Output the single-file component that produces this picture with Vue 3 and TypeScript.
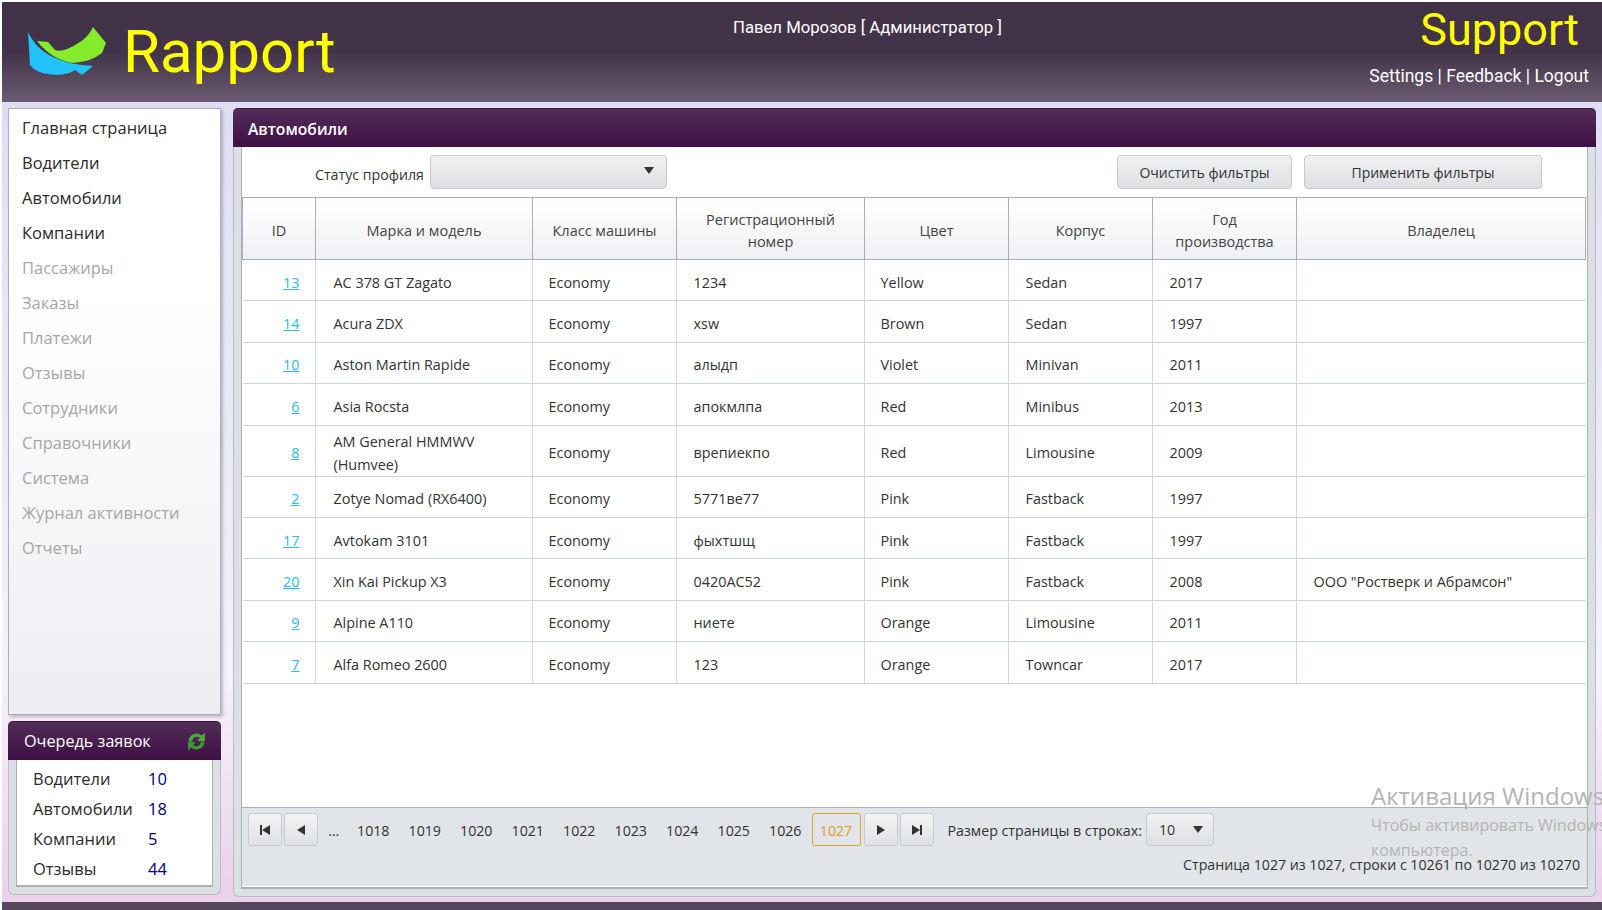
<template>
  <div class="page">
    <header class="top-bar">
      <div class="brand">
        <svg class="logo" width="80" height="52" viewBox="0 0 80 52">
          <path d="M0 5 C4 14 12 24 25 30 C40 37 52 38 65 39 L54 48 L47 43 C42 47 30 49 20 47 C12 46 6 43 2 38 Z" fill="#22c3fb" />
          <path d="M9 14 L20 15 L27 23 C33 26 45 20 55 13 C60 9 63 4 65 0 L78 16 L74 26 C66 32 58 35 44 36 C30 33 18 26 9 14 Z" fill="#85ec2c" />
        </svg>
        <span class="brand-name">Rapport</span>
      </div>
      <div class="user-name">Павел Морозов [ Администратор ]</div>
      <div class="top-right">
        <div class="support">Support</div>
        <div class="top-links">Settings | Feedback | Logout</div>
      </div>
    </header>

    <div class="workspace">
      <aside class="sidebar">
        <nav class="menu">
          <a
            v-for="item in menuItems"
            :key="item.label"
            class="menu-item"
            :class="{ disabled: item.disabled }"
          >{{ item.label }}</a>
        </nav>
        <section class="queue">
          <div class="queue-head">
            <span>Очередь заявок</span>
            <svg class="refresh" width="21" height="21" viewBox="0 0 20 20">
              <path d="M2.500 10 A7.500 7.500 0 0 1 15 4.300 L18 1.500 V9.500 H10.500 L13.300 6.700 A4.300 4.300 0 0 0 6 10 Z" fill="#4aa83e" />
              <path d="M17.500 10 A7.500 7.500 0 0 1 5 15.700 L2 18.500 V10.500 H9.500 L6.700 13.300 A4.300 4.300 0 0 0 14 10 Z" fill="#3c9a35" />
            </svg>
          </div>
          <div class="queue-frame">
            <div class="queue-body">
              <div v-for="q in queueItems" :key="q.label" class="queue-row">
                <span class="queue-label">{{ q.label }}</span>
                <span class="queue-count">{{ q.count }}</span>
              </div>
            </div>
          </div>
        </section>
      </aside>

      <main class="panel">
        <div class="panel-head">Автомобили</div>
        <div class="panel-frame">
          <div class="panel-inner">
            <div class="filters">
              <div class="filter-left">
                <label class="filter-label">Статус профиля</label>
                <div class="filter-select"><span class="arrow-down"></span></div>
              </div>
              <div class="filter-buttons">
                <button class="btn btn-clear">Очистить фильтры</button>
                <button class="btn btn-apply">Применить фильтры</button>
              </div>
            </div>

            <div class="table-area">
              <table class="grid">
                <colgroup>
                  <col v-for="(w, i) in colWidths" :key="i" :style="{ width: w + 'px' }" />
                </colgroup>
                <thead>
                  <tr>
                    <th>ID</th>
                    <th>Марка и модель</th>
                    <th>Класс машины</th>
                    <th>Регистрационный номер</th>
                    <th>Цвет</th>
                    <th>Корпус</th>
                    <th>Год производства</th>
                    <th>Владелец</th>
                  </tr>
                </thead>
                <tbody>
                  <tr v-for="car in cars" :key="car.id">
                    <td class="id-cell"><a class="id-link">{{ car.id }}</a></td>
                    <td class="model-cell">{{ car.model }}</td>
                    <td class="tight-cell">Economy</td>
                    <td>{{ car.plate }}</td>
                    <td class="tight-cell">{{ car.color }}</td>
                    <td>{{ car.body }}</td>
                    <td>{{ car.year }}</td>
                    <td>{{ car.owner }}</td>
                  </tr>
                </tbody>
              </table>
            </div>

            <div class="pager">
              <div class="pager-row">
                <button class="pg-btn">
                  <svg width="14" height="14" viewBox="0 0 14 14"><path d="M2 2H4V12H2ZM12 2V12L4 7Z" fill="#333" /></svg>
                </button>
                <button class="pg-btn">
                  <svg width="14" height="14" viewBox="0 0 14 14"><path d="M11 2V12L3 7Z" fill="#333" /></svg>
                </button>
                <span class="pg-dots">...</span>
                <span v-for="p in pages" :key="p" class="pg-num">{{ p }}</span>
                <span class="pg-current">1027</span>
                <button class="pg-btn">
                  <svg width="14" height="14" viewBox="0 0 14 14"><path d="M3 2V12L11 7Z" fill="#333" /></svg>
                </button>
                <button class="pg-btn">
                  <svg width="14" height="14" viewBox="0 0 14 14"><path d="M2 2V12L10 7ZM10 2H12V12H10Z" fill="#333" /></svg>
                </button>
                <span class="pg-size-label">Размер страницы в строках:</span>
                <div class="pg-size"><span>10</span><span class="arrow-down"></span></div>
              </div>
              <div class="pager-info">Страница 1027 из 1027, строки с 10261 по 10270 из 10270</div>
            </div>
          </div>
        </div>
      </main>
    </div>
    <div class="bottom-bar"></div>

    <div class="watermark">
      <div class="wm-title">Активация Windows</div>
      <div class="wm-text">Чтобы активировать Windows, перейдите в раздел "Параметры"</div>
      <div class="wm-text">компьютера.</div>
    </div>
  </div>
</template>

<script setup lang="ts">
interface Car {
  id: number
  model: string
  plate: string
  color: string
  body: string
  year: number
  owner: string
}

const menuItems = [
  { label: 'Главная страница', disabled: false },
  { label: 'Водители', disabled: false },
  { label: 'Автомобили', disabled: false },
  { label: 'Компании', disabled: false },
  { label: 'Пассажиры', disabled: true },
  { label: 'Заказы', disabled: true },
  { label: 'Платежи', disabled: true },
  { label: 'Отзывы', disabled: true },
  { label: 'Сотрудники', disabled: true },
  { label: 'Справочники', disabled: true },
  { label: 'Система', disabled: true },
  { label: 'Журнал активности', disabled: true },
  { label: 'Отчеты', disabled: true }
]

const queueItems = [
  { label: 'Водители', count: 10 },
  { label: 'Автомобили', count: 18 },
  { label: 'Компании', count: 5 },
  { label: 'Отзывы', count: 44 }
]

const colWidths = [73, 217, 144, 188, 144, 144, 144, 289]

const pages = [1018, 1019, 1020, 1021, 1022, 1023, 1024, 1025, 1026]

const cars: Car[] = [
  { id: 13, model: 'AC 378 GT Zagato', plate: '1234', color: 'Yellow', body: 'Sedan', year: 2017, owner: '' },
  { id: 14, model: 'Acura ZDX', plate: 'xsw', color: 'Brown', body: 'Sedan', year: 1997, owner: '' },
  { id: 10, model: 'Aston Martin Rapide', plate: 'алыдп', color: 'Violet', body: 'Minivan', year: 2011, owner: '' },
  { id: 6, model: 'Asia Rocsta', plate: 'апокмлпа', color: 'Red', body: 'Minibus', year: 2013, owner: '' },
  { id: 8, model: 'AM General HMMWV (Humvee)', plate: 'врепиекпо', color: 'Red', body: 'Limousine', year: 2009, owner: '' },
  { id: 2, model: 'Zotye Nomad (RX6400)', plate: '5771ве77', color: 'Pink', body: 'Fastback', year: 1997, owner: '' },
  { id: 17, model: 'Avtokam 3101', plate: 'фыхтшщ', color: 'Pink', body: 'Fastback', year: 1997, owner: '' },
  { id: 20, model: 'Xin Kai Pickup X3', plate: '0420АС52', color: 'Pink', body: 'Fastback', year: 2008, owner: 'ООО "Ростверк и Абрамсон"' },
  { id: 9, model: 'Alpine A110', plate: 'ниете', color: 'Orange', body: 'Limousine', year: 2011, owner: '' },
  { id: 7, model: 'Alfa Romeo 2600', plate: '123', color: 'Orange', body: 'Towncar', year: 2017, owner: '' }
]
</script>

<style>
html,
body {
  margin: 0;
  overflow: hidden;
  background: #fff;
}
</style>

<style scoped>
.page {
  position: relative;
  width: 1602px;
  height: 910px;
  overflow: hidden;
  box-sizing: border-box;
  padding: 2px 0 0 2px;
  display: flex;
  flex-direction: column;
  font-family: "Open Sans", "Noto Sans", sans-serif;
  font-size: 14.200px;
  color: #333;
}

.top-bar {
  height: 100px;
  flex: none;
  display: grid;
  grid-template-columns: 731px auto 1fr;
  background: linear-gradient(to bottom, #423248 0%, #433349 50%, #6b5c71 100%);
  font-family: Roboto, sans-serif;
}

.brand {
  display: flex;
  align-items: flex-start;
  padding: 25px 0 0 26px;
  gap: 15px;
}

.brand-name {
  color: #ffff00;
  font-size: 60px;
  line-height: 52px;
  margin-top: -1px;
}

.user-name {
  color: #fff;
  font-size: 16.700px;
  padding-top: 16px;
}

.top-right {
  display: flex;
  flex-direction: column;
  align-items: flex-end;
  padding-right: 13px;
}

.support {
  color: #ffff00;
  font-size: 45px;
  line-height: 50px;
  padding: 3px 10px 0 0;
}

.top-links {
  color: #fff;
  font-size: 17.500px;
  line-height: 22px;
  margin-top: 10px;
}

.workspace {
  flex: 1;
  display: flex;
  gap: 12px;
  padding: 6px 6px 5px 6px;
  min-height: 0;
  background: linear-gradient(to bottom, #e0def3 0%, #f6f2fa 72%, #ebd0e9 100%);
}

.sidebar {
  width: 213px;
  flex: none;
  display: flex;
  flex-direction: column;
  gap: 6px;
  margin-bottom: 2px;
}

.menu {
  flex: 1;
  box-sizing: border-box;
  border: 1px solid #a9b0b9;
  padding: 1px 0 0 13px;
  display: flex;
  flex-direction: column;
  background: linear-gradient(to bottom, #fff 0%, #fff 30%, #eceef2 100%);
  box-shadow: 2px 2px 3px rgba(90, 90, 100, 0.35);
}

.menu-item {
  height: 35px;
  line-height: 35px;
  font-size: 16.500px;
  color: #2b2b2b;
}

.menu-item.disabled {
  color: #a6a6a6;
}

.queue {
  height: 174px;
  flex: none;
  display: flex;
  flex-direction: column;
}

.queue-head {
  height: 39px;
  flex: none;
  box-sizing: border-box;
  padding: 0 14px 0 16px;
  display: flex;
  align-items: center;
  justify-content: space-between;
  border-top: 1px solid #3f1046;
  border-radius: 5px 5px 0 0;
  background: linear-gradient(to bottom, #522e58 0%, #3f0e45 100%);
  color: #fff;
  font-size: 16.200px;
}

.queue-frame {
  flex: 1;
  background: #dcdfe3;
  border: 1px solid #b8bdc3;
  border-top: none;
  border-radius: 0 0 6px 6px;
  padding: 0 7px 7px;
  display: flex;
}

.queue-body {
  flex: 1;
  background: #fff;
  border: 1px solid #a9b0b9;
  border-width: 0 1px 2px;
  padding: 4px 0 0 16px;
}

.queue-row {
  display: flex;
  height: 30px;
  line-height: 30px;
  font-size: 16.500px;
  color: #2b2b2b;
}

.queue-label {
  width: 115px;
}

.queue-count {
  color: #00007f;
}

.panel {
  flex: 1;
  min-width: 0;
  display: flex;
  flex-direction: column;
}

.panel-head {
  height: 39px;
  flex: none;
  box-sizing: border-box;
  padding-left: 15px;
  line-height: 40px;
  font-size: 15.700px;
  font-weight: 600;
  color: #fff;
  border-top: 1px solid #3f1046;
  border-radius: 5px 5px 0 0;
  background: linear-gradient(to bottom, #522e58 0%, #3f0e45 100%);
}

.panel-frame {
  flex: 1;
  min-height: 0;
  display: flex;
  background: #dcdfe3;
  border: 1px solid #b8bdc3;
  border-top: none;
  border-radius: 0 0 6px 6px;
  padding: 0 7px 7px;
}

.panel-inner {
  flex: 1;
  min-width: 0;
  background: #fff;
  border: 1px solid #a9b0b9;
  border-top: none;
  border-bottom-width: 2px;
  display: flex;
  flex-direction: column;
}

.filters {
  height: 50px;
  flex: none;
  display: flex;
  justify-content: space-between;
  box-sizing: border-box;
  padding: 8px 45px 0 73px;
}

.filter-left {
  display: flex;
  align-items: flex-start;
  gap: 6px;
}

.filter-label {
  line-height: 39px;
  font-size: 14.200px;
}

.filter-select {
  width: 237px;
  height: 34px;
  box-sizing: border-box;
  border: 1px solid #c6c9cf;
  border-radius: 4px;
  background: linear-gradient(to bottom, #f0f1f3, #dddfe3);
  display: flex;
  align-items: center;
  justify-content: flex-end;
  padding: 0 12px 4px 0;
}

.arrow-down {
  width: 0;
  height: 0;
  border-left: 5.500px solid transparent;
  border-right: 5.500px solid transparent;
  border-top: 7px solid #333;
}

.filter-buttons {
  display: flex;
  gap: 12px;
}

.btn {
  height: 34px;
  box-sizing: border-box;
  border: 1px solid #c6c9cf;
  border-radius: 4px;
  background: linear-gradient(to bottom, #f0f1f3, #dddfe3);
  font: inherit;
  font-size: 14px;
  color: #333;
  padding: 0;
}

.btn-clear {
  width: 175px;
}

.btn-apply {
  width: 238px;
}

.table-area {
  flex: 1;
  min-height: 0;
}

.grid {
  width: 1343px;
  table-layout: fixed;
  border-collapse: collapse;
}

.grid th {
  height: 62px;
  box-sizing: border-box;
  padding: 5px 14px 0;
  font-weight: 400;
  font-size: 14.500px;
  line-height: 22px;
  color: #444;
  border: 1px solid #a9b0b9;
  background: linear-gradient(to bottom, #fff, #eef0f3);
}

.grid td {
  height: 41.400px;
  box-sizing: border-box;
  padding: 4px 16.500px 0;
  font-size: 14.400px;
  line-height: 23px;
  color: #333;
  border-right: 1px solid #cfd6e3;
  border-bottom: 1px solid #cfd6e3;
}

.grid td:last-child {
  border-right: none;
}

.grid td.id-cell {
  text-align: right;
  padding-right: 15.500px;
}

.grid td.model-cell {
  padding-left: 17.500px;
}

.grid td.tight-cell {
  padding-left: 15.500px;
}

.id-link {
  color: #2eb8f0;
  text-decoration: underline;
}

.pager {
  height: 80px;
  flex: none;
  box-sizing: border-box;
  border-top: 1px solid #a9b0b9;
  background: #e1e4e8;
  padding: 5px 5px 0 6px;
  border-bottom: 1px solid #fff;
}

.pager-row {
  display: flex;
  align-items: flex-start;
  height: 34px;
}

.pg-btn {
  width: 34px;
  height: 33px;
  box-sizing: border-box;
  border: 1px solid #c6c9cf;
  border-radius: 3px;
  background: linear-gradient(to bottom, #f2f3f4, #dfe1e5);
  padding: 0;
  margin-right: 2px;
  display: flex;
  align-items: center;
  justify-content: center;
}

.pg-dots {
  width: 27.500px;
  line-height: 36px;
  text-align: center;
}

.pg-num {
  width: 51.500px;
  line-height: 36px;
  text-align: center;
}

.pg-current {
  width: 49px;
  height: 33px;
  box-sizing: border-box;
  line-height: 33px;
  text-align: center;
  color: #e69a1a;
  border: 1px solid #e0a030;
  border-radius: 3px;
  margin: 0 3px 0 0.500px;
}

.pg-size-label {
  line-height: 36px;
  margin-left: 12px;
  margin-right: 4px;
}

.pg-size {
  width: 68px;
  height: 33px;
  box-sizing: border-box;
  border: 1px solid #c6c9cf;
  border-radius: 4px;
  background: linear-gradient(to bottom, #f0f1f3, #dddfe3);
  display: flex;
  align-items: center;
  justify-content: space-between;
  padding: 0 10px 0 12px;
}

.pager-info {
  text-align: right;
  margin-top: 7px;
  padding-right: 2px;
  line-height: 22px;
}

.bottom-bar {
  height: 8px;
  flex: none;
  background: #54465c;
}

.watermark {
  position: absolute;
  left: 1371px;
  top: 778px;
  color: #b4b4b4;
  pointer-events: none;
  white-space: nowrap;
}

.wm-title {
  font-size: 24px;
  line-height: 35px;
}

.wm-text {
  font-size: 16px;
  line-height: 25px;
}
</style>
